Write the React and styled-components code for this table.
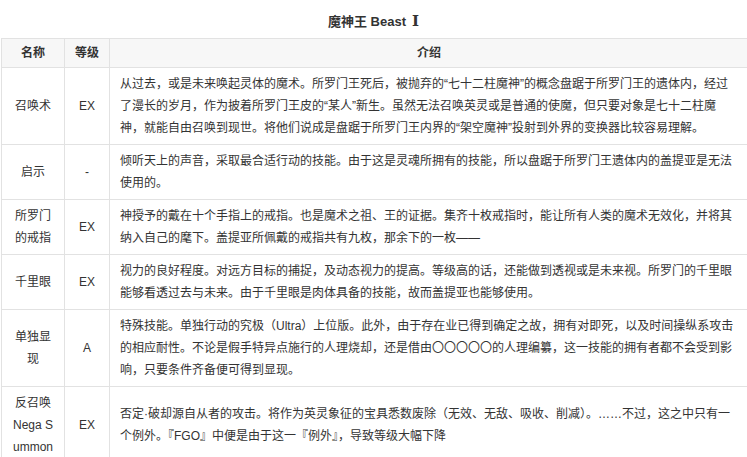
import React from 'react';
import styled, { createGlobalStyle } from 'styled-components';

const GlobalStyle = createGlobalStyle`
  html, body {
    margin: 0;
    padding: 0;
    background: #fff;
    overflow: hidden;
  }
  body {
    font-family: "Liberation Sans", "Noto Sans CJK SC", sans-serif;
    font-size: 12px;
    color: #333;
  }
`;

const Wrapper = styled.div`
  width: 747px;
  height: 457px;
  padding-left: 1px;
  overflow: hidden;
`;

const Table = styled.table`
  width: 748px;
  border-collapse: collapse;
  table-layout: fixed;
`;

const Caption = styled.caption`
  font-size: 13px;
  font-weight: bold;
  line-height: 22px;
  padding: 10px 0 5px;
  color: #333;
  text-align: center;
  margin-left: -1px;
  width: 747px;
`;

const Numeral = styled.span`
  font-family: "DejaVu Serif", serif;
  font-weight: bold;
  font-size: 15px;
  margin-left: 6px;
`;

const Th = styled.th`
  background: #f7f7f7;
  border: 1px solid #e2e2e2;
  padding: 3px 10px;
  line-height: 22px;
  font-weight: bold;
  text-align: center;
  color: #333;
`;

const Td = styled.td`
  border: 1px solid #e2e2e2;
  padding: 5px 10px;
  line-height: 22px;
  vertical-align: middle;
  text-align: ${p => (p.$center ? 'center' : 'left')};
  word-break: break-all;
`;

const rows = [
  {
    name: '召唤术',
    rank: 'EX',
    text: '从过去，或是未来唤起灵体的魔术。所罗门王死后，被抛弃的“七十二柱魔神”的概念盘踞于所罗门王的遗体内，经过了漫长的岁月，作为披着所罗门王皮的“某人”新生。虽然无法召唤英灵或是普通的使魔，但只要对象是七十二柱魔神，就能自由召唤到现世。将他们说成是盘踞于所罗门王内界的“架空魔神”投射到外界的变换器比较容易理解。'
  },
  {
    name: '启示',
    rank: '-',
    text: '倾听天上的声音，采取最合适行动的技能。由于这是灵魂所拥有的技能，所以盘踞于所罗门王遗体内的盖提亚是无法使用的。'
  },
  {
    name: '所罗门的戒指',
    rank: 'EX',
    text: '神授予的戴在十个手指上的戒指。也是魔术之祖、王的证据。集齐十枚戒指时，能让所有人类的魔术无效化，并将其纳入自己的麾下。盖提亚所佩戴的戒指共有九枚，那余下的一枚——'
  },
  {
    name: '千里眼',
    rank: 'EX',
    text: '视力的良好程度。对远方目标的捕捉，及动态视力的提高。等级高的话，还能做到透视或是未来视。所罗门的千里眼能够看透过去与未来。由于千里眼是肉体具备的技能，故而盖提亚也能够使用。'
  },
  {
    name: '单独显现',
    rank: 'A',
    text: '特殊技能。单独行动的究极（Ultra）上位版。此外，由于存在业已得到确定之故，拥有对即死，以及时间操纵系攻击的相应耐性。不论是假手特异点施行的人理烧却，还是借由〇〇〇〇〇的人理编纂，这一技能的拥有者都不会受到影响，只要条件齐备便可得到显现。'
  },
  {
    name: '反召唤Nega Summon',
    rank: 'EX',
    text: '否定·破却源自从者的攻击。将作为英灵象征的宝具悉数废除（无效、无敌、吸收、削减）。……不过，这之中只有一个例外。『FGO』中便是由于这一『例外』，导致等级大幅下降'
  }
];

const NameCell = ({ name }) => {
  if (name.startsWith('反召唤')) {
    return (
      <Td $center>
        反召唤<br />Nega Summon
      </Td>
    );
  }
  return <Td $center>{name}</Td>;
};

export default function App() {
  return (
    <Wrapper>
      <GlobalStyle />
      <Table>
        <Caption>魔神王 Beast<Numeral>Ⅰ</Numeral></Caption>
        <colgroup>
          <col style={{ width: 63 }} />
          <col style={{ width: 45 }} />
          <col />
        </colgroup>
        <thead>
          <tr>
            <Th>名称</Th>
            <Th>等级</Th>
            <Th>介绍</Th>
          </tr>
        </thead>
        <tbody>
          {rows.map(r => (
            <tr key={r.name}>
              <NameCell name={r.name} />
              <Td $center>{r.rank}</Td>
              <Td>{r.text}</Td>
            </tr>
          ))}
        </tbody>
      </Table>
    </Wrapper>
  );
}
